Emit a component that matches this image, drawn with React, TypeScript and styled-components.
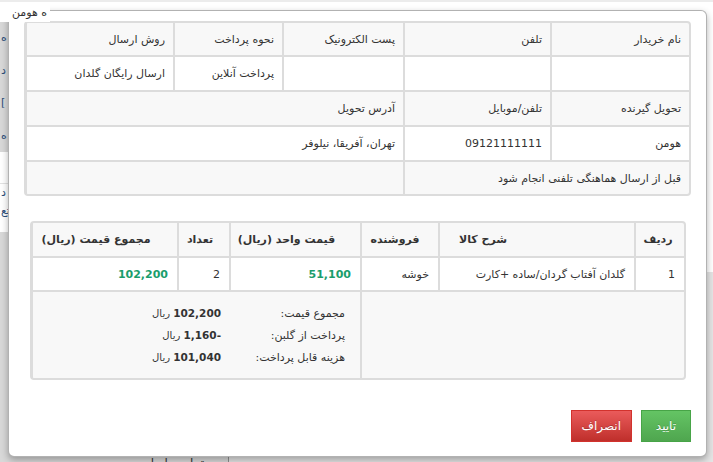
import React from 'react';
import styled, { createGlobalStyle } from 'styled-components';

const Global = createGlobalStyle`
  html, body { margin: 0; padding: 0; }
  body {
    font-family: "DejaVu Sans", "Noto Sans", sans-serif;
    font-size: 11px;
    color: #333;
    background: #fff;
    width: 713px;
    height: 462px;
    overflow: hidden;
  }
  * { box-sizing: border-box; }
`;

/* ---------- background page ---------- */
const Page = styled.div`
  position: relative;
  width: 713px;
  height: 462px;
  overflow: hidden;
  background: #fff;
  border-top: 2px solid #ececec;
  display: grid;
  grid-template-columns: 229px 1fr;
  grid-template-rows: 20px 1fr;
  direction: ltr;
`;

const TopBar = styled.div`
  grid-column: 1 / span 2;
  background: #fff;
`;

const Sidebar = styled.aside`
  display: grid;
  grid-template-rows: 130px 80px 1fr;
  border-right: 1px solid #8f8f8f;
`;

const SideBlock = styled.div<{ $tone: 'grey' | 'white' }>`
  display: flex;
  flex-direction: column;
  justify-content: ${(p) => (p.$tone === 'grey' ? 'space-around' : 'center')};
  background: ${(p) => (p.$tone === 'grey' ? '#d8d8d8' : '#fff')};
  overflow: hidden;
`;

const SideItem = styled.div<{ $line?: boolean }>`
  font-size: 11px;
  color: #2d4f7a;
  padding-left: 1px;
  line-height: 18px;
  border-bottom: ${(p) => (p.$line ? '1px solid #e2e2e2' : 'none')};
`;

const SideFooter = styled.div`
  margin-top: auto;
  margin-bottom: -8px;
  direction: rtl;
  text-align: right;
  padding-right: 24px;
  color: #333;
  font-size: 12px;
  line-height: 14px;
`;

const Main = styled.main`
  display: grid;
  grid-template-rows: 250px 1fr;
`;

const MainTop = styled.div`
  background: #fff;
`;

const MainBottom = styled.div`
  background: #e4e4e4;
`;

const Legend = styled.div`
  position: absolute;
  left: 0;
  top: -2px;
  width: 50px;
  height: 22px;
  background: #fff;
  direction: rtl;
  text-align: right;
  padding: 6px 3px 0 0;
  font-size: 11px;
  line-height: 13px;
  color: #333;
  z-index: 3;
`;

/* ---------- modal ---------- */
const Modal = styled.div`
  position: absolute;
  left: 8px;
  top: 8px;
  width: 699px;
  height: 447px;
  background: #fff;
  border: 1px solid rgba(0, 0, 0, 0.3);
  border-radius: 6px;
  box-shadow: 0 3px 7px rgba(0, 0, 0, 0.3);
  direction: rtl;
  display: flex;
  flex-direction: column;
  z-index: 2;
`;

const ModalBody = styled.div`
  padding: 10px 15px 0;
  display: flex;
  flex-direction: column;
`;

const InfoGrid = styled.div`
  display: grid;
  grid-template-columns: 137px 145px 119px 107px 146px;
  grid-template-rows: 32px 33px 33px 33px 32px;
  gap: 2px;
  background: #dcdcdc;
  border: 2px solid #dcdcdc;
  border-radius: 4px;
  overflow: hidden;
`;

const Cell = styled.div<{ $head?: boolean; $span?: number }>`
  grid-column: span ${(p) => p.$span ?? 1};
  background: ${(p) => (p.$head ? '#f8f8f8' : '#fff')};
  display: flex;
  align-items: center;
  justify-content: flex-start;
  padding: 0 8px;
  font-size: 11px;
  color: #333;
  white-space: nowrap;
`;

const ItemsGrid = styled.div`
  margin: 25px 5px 0 6px;
  display: grid;
  grid-template-columns: 48px 194px 76px 129px 50px 144px;
  grid-template-rows: 33px 32px 86px;
  gap: 2px;
  background: #dcdcdc;
  border: 2px solid #dcdcdc;
  border-radius: 4px;
  overflow: hidden;
`;

const HeadCell = styled.div<{ $pr: number }>`
  background: #f8f8f8;
  display: flex;
  align-items: center;
  justify-content: center;
  padding: 0 ${(p) => p.$pr}px 0 0;
  font-weight: bold;
  font-size: 11px;
  color: #333;
  white-space: nowrap;
`;

const BodyCell = styled.div<{ $price?: boolean }>`
  background: #fff;
  display: flex;
  align-items: center;
  justify-content: flex-start;
  padding: 0 9px;
  font-size: 11px;
  font-weight: ${(p) => (p.$price ? 'bold' : 'normal')};
  color: ${(p) => (p.$price ? '#1a9d6c' : '#333')};
  white-space: nowrap;
`;

const SummaryCell = styled.div<{ $span: number }>`
  grid-column: span ${(p) => p.$span};
  background: #f8f8f8;
  display: flex;
  align-items: center;
  padding: 0 15px;
`;

const SummaryList = styled.div`
  display: grid;
  grid-template-columns: 112px auto;
  column-gap: 12px;
  grid-auto-rows: 22px;
  align-items: center;
`;

const SumLabel = styled.div`
  font-size: 11px;
  color: #333;
  white-space: nowrap;
`;

const SumValue = styled.div`
  font-size: 10px;
  color: #333;
  white-space: nowrap;
  b {
    font-weight: bold;
    font-size: 10.5px;
  }
`;

const Footer = styled.div`
  padding: 30px 15px 14px;
  display: flex;
  justify-content: flex-start;
  gap: 9px;
`;

const Button = styled.button<{ $variant: 'success' | 'danger' }>`
  height: 32px;
  min-width: 50px;
  padding: 0 10px;
  font-family: "DejaVu Sans", sans-serif;
  font-size: 12px;
  color: #fff;
  text-shadow: 0 -1px 0 rgba(0, 0, 0, 0.2);
  border-radius: 0;
  cursor: pointer;
  border: 1px solid ${(p) => (p.$variant === 'success' ? '#47a447' : '#d2322d')};
  background: ${(p) =>
    p.$variant === 'success'
      ? 'linear-gradient(#64c464, #4fa64f)'
      : 'linear-gradient(#ea5b5b, #bf2f2b)'};
`;

const headers = [
  { label: 'ردیف', pr: 4 },
  { label: 'شرح کالا', pr: 108 },
  { label: 'فروشنده', pr: 10 },
  { label: 'قیمت واحد (ریال)', pr: 18 },
  { label: 'تعداد', pr: 8 },
  { label: 'مجموع قیمت (ریال)', pr: 18 },
];

const products = [
  { idx: '1', name: 'گلدان آفتاب گردان/ساده +کارت', seller: 'خوشه', unit: '51,100', qty: '2', total: '102,200' },
];

export default function App() {
  return (
    <>
      <Global />
      <Page>
        <TopBar />
        <Sidebar>
          <SideBlock $tone="grey">
            <SideItem>ه</SideItem>
            <SideItem>د</SideItem>
            <SideItem>[</SideItem>
            <SideItem>ه</SideItem>
          </SideBlock>
          <SideBlock $tone="white">
            <SideItem $line>&nbsp;</SideItem>
            <SideItem>د</SideItem>
            <SideItem>تع</SideItem>
          </SideBlock>
          <SideBlock $tone="grey">
            <SideFooter>تماس با ما</SideFooter>
          </SideBlock>
        </Sidebar>
        <Main>
          <MainTop />
          <MainBottom />
        </Main>

        <Legend>ه هومن</Legend>

        <Modal>
          <ModalBody>
            <InfoGrid>
              <Cell $head>نام خریدار</Cell>
              <Cell $head>تلفن</Cell>
              <Cell $head>پست الکترونیک</Cell>
              <Cell $head>نحوه پرداخت</Cell>
              <Cell $head>روش ارسال</Cell>

              <Cell />
              <Cell />
              <Cell />
              <Cell>پرداخت آنلاین</Cell>
              <Cell>ارسال رایگان گلدان</Cell>

              <Cell $head>تحویل گیرنده</Cell>
              <Cell $head>تلفن/موبایل</Cell>
              <Cell $head $span={3}>آدرس تحویل</Cell>

              <Cell>هومن</Cell>
              <Cell>09121111111</Cell>
              <Cell $span={3}>تهران، آفریقا، نیلوفر</Cell>

              <Cell $head $span={2}>قبل از ارسال هماهنگی تلفنی انجام شود</Cell>
              <Cell $head $span={3} />
            </InfoGrid>

            <ItemsGrid>
              {headers.map((h) => (
                <HeadCell key={h.label} $pr={h.pr}>{h.label}</HeadCell>
              ))}

              {products.map((p) => (
                <React.Fragment key={p.idx}>
                  <BodyCell>{p.idx}</BodyCell>
                  <BodyCell>{p.name}</BodyCell>
                  <BodyCell>{p.seller}</BodyCell>
                  <BodyCell $price>{p.unit}</BodyCell>
                  <BodyCell>{p.qty}</BodyCell>
                  <BodyCell $price>{p.total}</BodyCell>
                </React.Fragment>
              ))}

              <SummaryCell $span={3} />
              <SummaryCell $span={3}>
                <SummaryList>
                  <SumLabel>مجموع قیمت:</SumLabel>
                  <SumValue><b>102,200</b> ریال</SumValue>
                  <SumLabel>پرداخت از گلبن:</SumLabel>
                  <SumValue><b>-1,160</b> ریال</SumValue>
                  <SumLabel>هزینه قابل پرداخت:</SumLabel>
                  <SumValue><b>101,040</b> ریال</SumValue>
                </SummaryList>
              </SummaryCell>
            </ItemsGrid>
          </ModalBody>
          <Footer>
            <Button $variant="success">تایید</Button>
            <Button $variant="danger">انصراف</Button>
          </Footer>
        </Modal>
      </Page>
    </>
  );
}
